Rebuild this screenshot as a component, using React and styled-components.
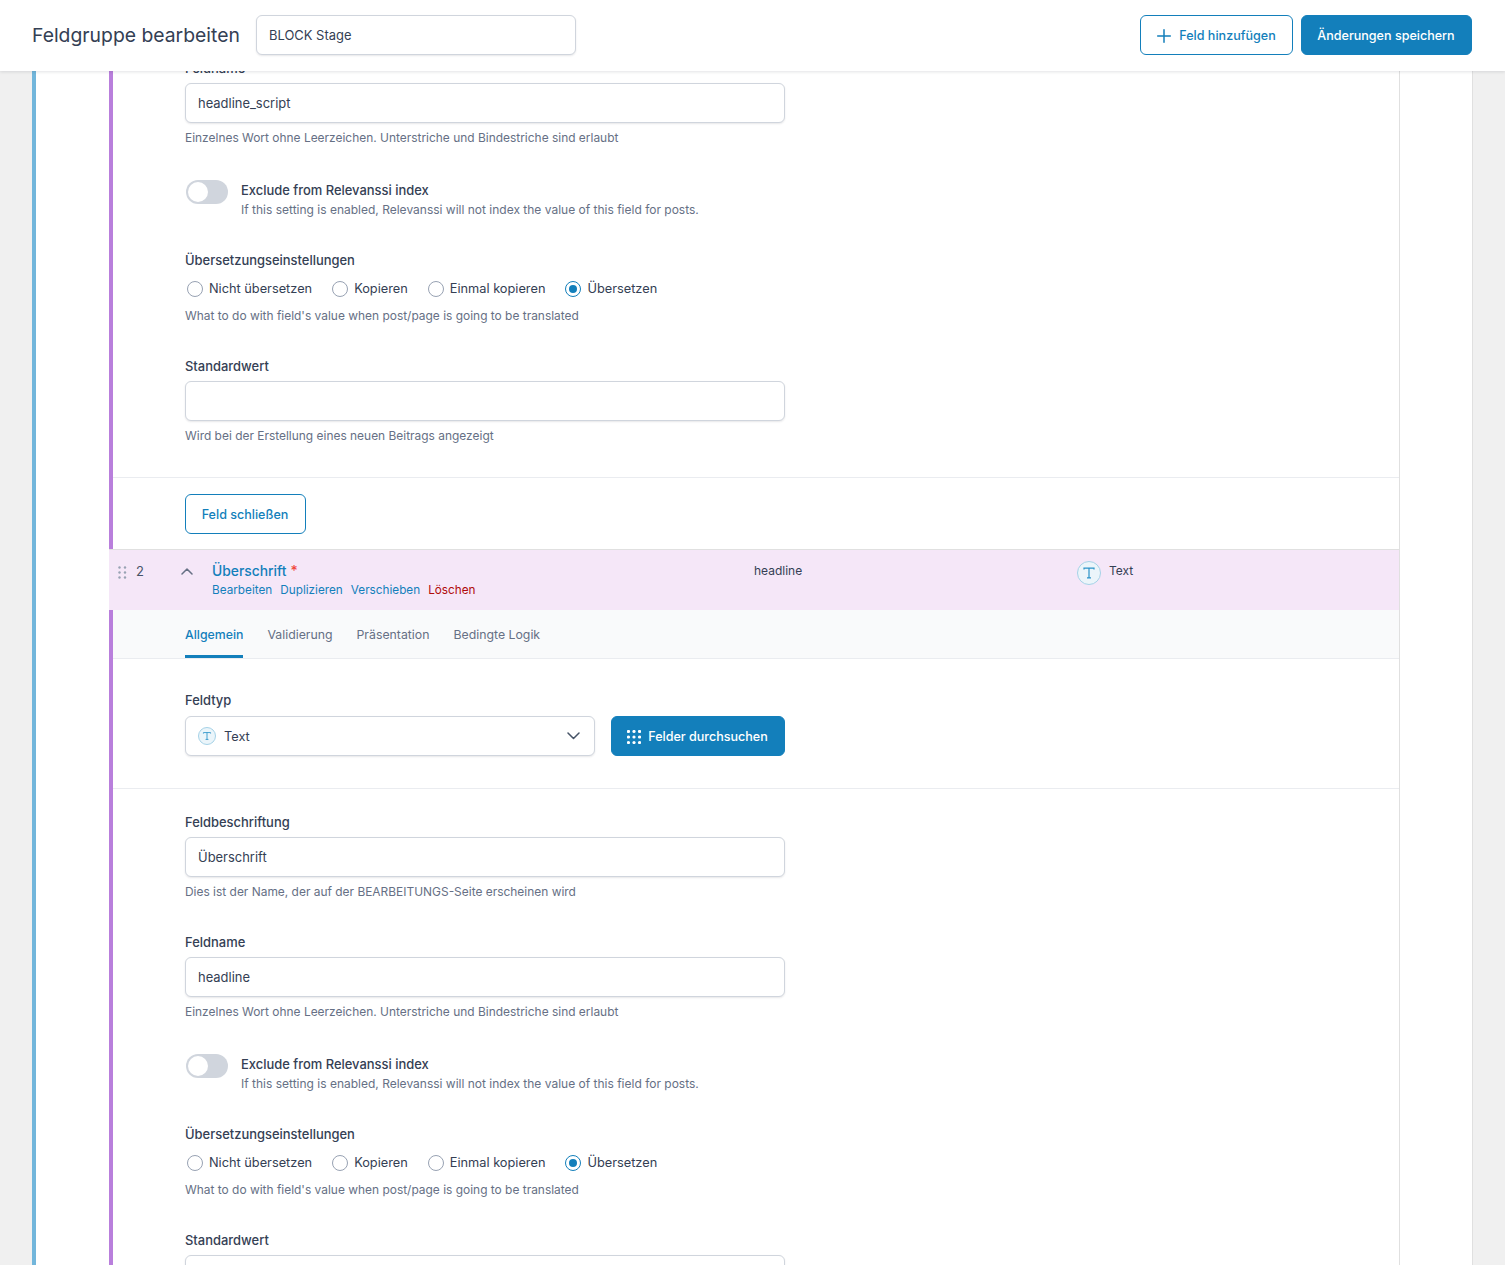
import React from "react";
import styled, { createGlobalStyle } from "styled-components";

const Global = createGlobalStyle`
  html, body { margin: 0; padding: 0; height: 1265px; overflow: hidden; background: #f0f0f0; }
  body { font-family: Inter, "Liberation Sans", sans-serif; font-size: 14px; color: #344054; -webkit-font-smoothing: antialiased; }
  * { box-sizing: border-box; }
`;

const Header = styled.header`
  position: relative;
  z-index: 2;
  height: 71px;
  background: #fff;
  box-shadow: 0 1px 3px rgba(16, 24, 40, 0.12);
  display: flex;
  align-items: center;
  padding: 0 33px 1px 32px;
`;
const Title = styled.h1`
  width: 208px;
  margin: 0 16px 0 0;
  font-size: 19.35px;
  line-height: 28px;
  font-weight: 400;
  color: #344054;
  white-space: nowrap;
`;
const TextInput = styled.input`
  display: block;
  width: ${(p) => p.$width || 600}px;
  height: 40px;
  padding: 0 12px;
  border: 1px solid #d0d5dd;
  border-radius: 6px;
  background: #fff;
  box-shadow: 0 1px 2px rgba(16, 24, 40, 0.1);
  font: 400 12.95px/20px Inter, "Liberation Sans", sans-serif;
  color: #344054;
  outline: none;
`;
const HeaderActions = styled.div`
  margin-left: auto;
  display: flex;
  gap: 8px;
`;
const Button = styled.button`
  height: 40px;
  display: inline-flex;
  align-items: center;
  justify-content: center;
  gap: 7px;
  padding: 1px 9px 0 8px;
  width: ${(p) => (p.$width ? `${p.$width}px` : "auto")};
  border-radius: 6px;
  border: 1px solid #137fbb;
  background: ${(p) => (p.$primary ? "#137fbb" : "#fff")};
  color: ${(p) => (p.$primary ? "#fff" : "#137fbb")};
  font: 500 12.55px/20px Inter, "Liberation Sans", sans-serif;
  white-space: nowrap;
  svg {
    flex: none;
  }
`;

const Page = styled.main`
  margin-top: -13px;
  padding: 0 32px;
`;
const Card = styled.section`
  min-height: 1300px;
  background: #fff;
  border-left: 4px solid #72b6db;
  border-right: 1px solid #e0e0e0;
  padding: 0 72px 0 73px;
`;
const FieldList = styled.div`
  border-right: 1px solid #e0e0e0;
  min-height: 1300px;
`;
const Settings = styled.div`
  border-left: 4px solid #b97fdc;
`;
const Section = styled.div`
  padding: ${(p) => p.$top ?? 0}px 0 ${(p) => p.$bottom ?? 31}px 72px;
  border-bottom: 1px solid #eaecf0;
  display: flex;
  flex-direction: column;
  gap: 30px;
`;
const LastSection = styled(Section)`
  border-bottom: none;
`;
const Footer = styled.div`
  padding: 16px 0 15px 72px;
`;
const Field = styled.div`
  display: flex;
  flex-direction: column;
`;
const Label = styled.label`
  font-size: 12.95px;
  line-height: 20px;
  font-weight: 500;
  color: #344054;
  margin-bottom: 5px;
`;
const Hint = styled.p`
  margin: 5px 0 0;
  font-size: 11.95px;
  line-height: 20px;
  color: #667085;
`;

const ToggleRow = styled.div`
  display: flex;
  gap: 13px;
  margin-top: 2px;
`;
const Track = styled.span`
  flex: none;
  width: 42px;
  height: 24px;
  margin-left: 1px;
  border-radius: 12px;
  background: #d0d5dd;
  padding: 2px;
`;
const Knob = styled.span`
  display: block;
  width: 20px;
  height: 20px;
  border-radius: 50%;
  background: #fff;
`;
const ToggleLabel = styled.div`
  font-size: 12.95px;
  line-height: 20px;
  font-weight: 500;
  color: #344054;
`;
const ToggleHint = styled.div`
  font-size: 12px;
  line-height: 20px;
  color: #667085;
`;

const Radios = styled.div`
  display: flex;
  align-items: center;
  height: 20px;
  margin: 4px 0 2px;
  padding-left: 2px;
`;
const RadioItem = styled.label`
  display: inline-flex;
  align-items: center;
  gap: 6px;
  margin-right: 20px;
  font-size: 12.78px;
  line-height: 20px;
  color: #344054;
`;
const RadioInput = styled.input`
  appearance: none;
  margin: 0;
  width: 16px;
  height: 16px;
  border-radius: 50%;
  background: #fff;
  border: 1px solid ${(p) => (p.checked ? "#137fbb" : "#98a2b3")};
  display: grid;
  place-content: center;
  &:checked::before {
    content: "";
    display: block;
    width: 8px;
    height: 8px;
    border-radius: 50%;
    background: #137fbb;
  }
`;

const Row = styled.div`
  height: 61px;
  border-top: 1px solid #e0e0e0;
  background: #f5e7f8;
  display: flex;
  padding-top: 11px;
`;
const Handle = styled.span`
  width: 27px;
  padding: 5px 0 0 9px;
  flex: none;
  line-height: 0;
`;
const OrderNo = styled.span`
  width: 45px;
  flex: none;
  font-size: 13px;
  line-height: 20px;
  color: #475467;
`;
const Chevron = styled.span`
  width: 31px;
  flex: none;
  line-height: 0;
  padding-top: 7px;
`;
const TitleCol = styled.div`
  width: 542px;
  flex: none;
`;
const FieldTitle = styled.a`
  display: block;
  font-size: 13.85px;
  line-height: 20px;
  font-weight: 500;
  color: #137fbb;
`;
const Required = styled.span`
  color: #f04438;
  margin-left: 4px;
`;
const Actions = styled.div`
  display: flex;
  gap: 8px;
  font-size: 11.75px;
  line-height: 18px;
`;
const Action = styled.a`
  color: ${(p) => (p.$danger ? "#b00b0b" : "#137fbb")};
`;
const NameCol = styled.div`
  width: 323px;
  flex: none;
  font-size: 12px;
  line-height: 20px;
  color: #344054;
`;
const TypeCol = styled.div`
  display: flex;
  gap: 8px;
  font-size: 12px;
  line-height: 20px;
  color: #344054;
`;
const TypeBadge = styled.span`
  flex: none;
  width: ${(p) => p.$size}px;
  height: ${(p) => p.$size}px;
  margin-top: ${(p) => p.$mt || 0}px;
  border-radius: 50%;
  background: #ebf5fa;
  border: 1px solid #a5d2e7;
  display: grid;
  place-content: center;
  line-height: 0;
`;

const Tabs = styled.nav`
  height: 49px;
  background: #f9fafb;
  border-bottom: 1px solid #eaecf0;
  padding-left: 72px;
  display: flex;
  gap: 24px;
`;
const Tab = styled.a`
  height: 48px;
  display: flex;
  align-items: center;
  padding-top: 4px;
  font-size: 12.3px;
  font-weight: ${(p) => (p.$active ? 500 : 400)};
  color: ${(p) => (p.$active ? "#137fbb" : "#667085")};
  border-bottom: 3px solid ${(p) => (p.$active ? "#137fbb" : "transparent")};
`;

const TypeControls = styled.div`
  display: flex;
  gap: 16px;
  margin-top: 1px;
`;
const SelectBox = styled.div`
  width: 410px;
  height: 40px;
  display: flex;
  align-items: center;
  gap: 8px;
  padding: 0 14px 0 12px;
  border: 1px solid #d0d5dd;
  border-radius: 6px;
  background: #fff;
  box-shadow: 0 1px 2px rgba(16, 24, 40, 0.1);
  font-size: 12.75px;
`;
const SelectCaret = styled.span`
  margin-left: auto;
  line-height: 0;
`;

const DragIcon = () => (
  <svg width="9" height="13" viewBox="0 0 9 13" fill="#98a2b3">
    {[1.5, 6.5, 11.5].map((y) =>
      [1.5, 7].map((x) => <circle key={`${x}-${y}`} cx={x} cy={y} r="1.2" />)
    )}
  </svg>
);
const TIcon = ({ size = 14 }) => (
  <svg width={size} height={size} viewBox="0 0 14 14" fill="none" stroke="#2b93c9" strokeWidth="1.2">
    <path d="M2 3.6V2.2h10v1.4M7 2.2v9.6M5 11.8h4" />
  </svg>
);
const GridIcon = () => (
  <svg width="14" height="14" viewBox="0 0 14 14" fill="#fff">
    {[1.5, 7, 12.5].map((y) =>
      [1.5, 7, 12.5].map((x) => <circle key={`${x}-${y}`} cx={x} cy={y} r="1.6" />)
    )}
  </svg>
);
const PlusIcon = () => (
  <svg width="16" height="16" viewBox="0 0 16 16" fill="none" stroke="#137fbb" strokeWidth="1.5" strokeLinecap="round">
    <path d="M8 1.7v12.6M1.7 8h12.6" />
  </svg>
);
const UpIcon = () => (
  <svg width="12" height="7" viewBox="0 0 12 7" fill="none" stroke="#667085" strokeWidth="1.5" strokeLinecap="round" strokeLinejoin="round">
    <path d="M1 6l5-5 5 5" />
  </svg>
);
const DownIcon = () => (
  <svg width="13" height="8" viewBox="0 0 13 8" fill="none" stroke="#475467" strokeWidth="1.5" strokeLinecap="round" strokeLinejoin="round">
    <path d="M1 1l5.5 5.5L12 1" />
  </svg>
);

const NameField = ({ value }) => (
  <Field>
    <Label>Feldname</Label>
    <TextInput readOnly defaultValue={value} />
    <Hint>Einzelnes Wort ohne Leerzeichen. Unterstriche und Bindestriche sind erlaubt</Hint>
  </Field>
);
const RelevanssiToggle = () => (
  <ToggleRow>
    <Track><Knob /></Track>
    <div>
      <ToggleLabel>Exclude from Relevanssi index</ToggleLabel>
      <ToggleHint>If this setting is enabled, Relevanssi will not index the value of this field for posts.</ToggleHint>
    </div>
  </ToggleRow>
);
const TranslationField = () => (
  <Field>
    <Label as="div">Übersetzungseinstellungen</Label>
    <Radios>
      {["Nicht übersetzen", "Kopieren", "Einmal kopieren", "Übersetzen"].map((t) => (
        <RadioItem key={t}>
          <RadioInput type="radio" readOnly checked={t === "Übersetzen"} />
          {t}
        </RadioItem>
      ))}
    </Radios>
    <Hint>What to do with field's value when post/page is going to be translated</Hint>
  </Field>
);
const DefaultField = ({ hint = true }) => (
  <Field>
    <Label>Standardwert</Label>
    <TextInput readOnly defaultValue="" />
    {hint && <Hint>Wird bei der Erstellung eines neuen Beitrags angezeigt</Hint>}
  </Field>
);

export default function App() {
  return (
    <>
      <Global />
      <Header>
        <Title>Feldgruppe bearbeiten</Title>
        <TextInput $width={320} readOnly defaultValue="BLOCK Stage" />
        <HeaderActions>
          <Button $width={153}><PlusIcon />Feld hinzufügen</Button>
          <Button $primary $width={171}>Änderungen speichern</Button>
        </HeaderActions>
      </Header>
      <Page>
        <Card>
          <FieldList>
            <Settings>
              <Section>
                <NameField value="headline_script" />
                <RelevanssiToggle />
                <TranslationField />
                <DefaultField />
              </Section>
              <Footer>
                <Button $width={121}>Feld schließen</Button>
              </Footer>
            </Settings>
            <Row>
              <Handle><DragIcon /></Handle>
              <OrderNo>2</OrderNo>
              <Chevron><UpIcon /></Chevron>
              <TitleCol>
                <FieldTitle>Überschrift<Required>*</Required></FieldTitle>
                <Actions>
                  <Action>Bearbeiten</Action>
                  <Action>Duplizieren</Action>
                  <Action>Verschieben</Action>
                  <Action $danger>Löschen</Action>
                </Actions>
              </TitleCol>
              <NameCol>headline</NameCol>
              <TypeCol>
                <TypeBadge $size={24}><TIcon size={14} /></TypeBadge>
                Text
              </TypeCol>
            </Row>
            <Settings>
              <Tabs>
                <Tab $active>Allgemein</Tab>
                <Tab>Validierung</Tab>
                <Tab>Präsentation</Tab>
                <Tab>Bedingte Logik</Tab>
              </Tabs>
              <Section $top={31} $bottom={32}>
                <Field>
                  <Label>Feldtyp</Label>
                  <TypeControls>
                    <SelectBox>
                      <TypeBadge $size={18}><TIcon size={10} /></TypeBadge>
                      Text
                      <SelectCaret><DownIcon /></SelectCaret>
                    </SelectBox>
                    <Button $primary $width={174}><GridIcon />Felder durchsuchen</Button>
                  </TypeControls>
                </Field>
              </Section>
              <LastSection $top={23}>
                <Field>
                  <Label>Feldbeschriftung</Label>
                  <TextInput readOnly defaultValue="Überschrift" />
                  <Hint>Dies ist der Name, der auf der BEARBEITUNGS-Seite erscheinen wird</Hint>
                </Field>
                <NameField value="headline" />
                <RelevanssiToggle />
                <TranslationField />
                <DefaultField hint={false} />
              </LastSection>
            </Settings>
          </FieldList>
        </Card>
      </Page>
    </>
  );
}
